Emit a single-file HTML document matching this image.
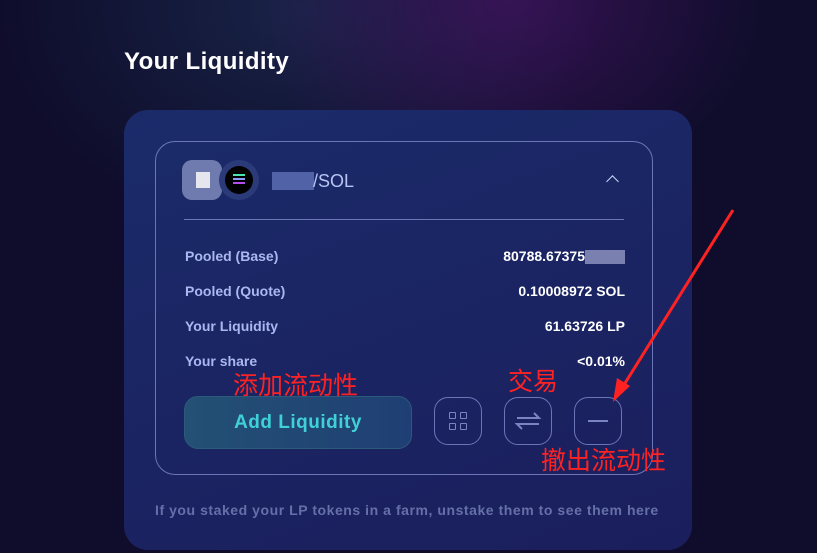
<!DOCTYPE html>
<html style="width:817px;height:553px;overflow:hidden;background:#0f0d2b"><head><meta charset="utf-8"><style>
body{margin:0;width:817px;height:553px;overflow:hidden;font-family:"Liberation Sans","Noto Sans CJK SC",sans-serif;
background:radial-gradient(ellipse 260px 200px at 510px 0px,rgba(70,20,100,.7),transparent),radial-gradient(ellipse 300px 220px at 300px 10px,rgba(30,50,90,.6),transparent),#0f0d2b;position:relative}
.t{position:absolute;left:124px;top:48px;color:#fff;font-size:24px;font-weight:bold;letter-spacing:.4px}
.card{position:absolute;left:124px;top:110px;width:568px;height:440px;border-radius:24px;background:linear-gradient(160deg,#1b2b6a,#1b1e5c)}
.box{position:absolute;left:155px;top:141px;width:496px;height:332px;border:1.5px solid #6b76b8;border-radius:20px}
.row{position:absolute;left:185px;width:440px;font-size:14px;color:#aab8f0;font-weight:bold}
.row span{position:absolute;right:0;color:#fff}
.r{position:absolute;color:#f22;font-size:25px;line-height:28px}
.ib{position:absolute;top:397px;width:48px;height:48px;border:1.5px solid #6b76b8;border-radius:14px;box-sizing:border-box}
.sq{position:absolute;width:5px;height:5px;border:1.5px solid #7a85c0;border-radius:1px}
</style></head><body>
<div class="t">Your Liquidity</div>
<div class="card"></div>
<div class="box"></div>
<div style="position:absolute;left:182px;top:160px;width:40px;height:40px;background:#8590c0;border-radius:10px;opacity:.8"></div>
<div style="position:absolute;left:196px;top:172px;width:14px;height:16px;background:#e6e6ee"></div>
<div style="position:absolute;left:219px;top:160px;width:40px;height:40px;border-radius:50%;background:#2b3a78"></div>
<div style="position:absolute;left:225px;top:166px;width:28px;height:28px;border-radius:50%;background:#000"></div>
<div style="position:absolute;left:233px;top:174px;width:12px;height:2px;background:#4be3b0;box-shadow:0 4px 0 #8a9cf5,0 8px 0 #b44cf0"></div>
<div style="position:absolute;left:272px;top:172px;width:42px;height:18px;background:#5262a6"></div>
<div style="position:absolute;left:313px;top:171px;color:#b7c4f4;font-size:18px">/SOL</div>
<div style="position:absolute;left:608px;top:177px;width:8px;height:8px;border-left:1.5px solid #cfd6f5;border-top:1.5px solid #cfd6f5;transform:rotate(45deg)"></div>
<div style="position:absolute;left:184px;top:219px;width:440px;height:1px;background:#6b76b8"></div>
<div class="row" style="top:248px">Pooled (Base)<span>80788.67375<b style="display:inline-block;width:40px;height:14px;background:#7a80b0;vertical-align:middle"></b></span></div>
<div class="row" style="top:283px">Pooled (Quote)<span>0.10008972 SOL</span></div>
<div class="row" style="top:318px">Your Liquidity<span>61.63726 LP</span></div>
<div class="row" style="top:353px">Your share<span>&lt;0.01%</span></div>
<div style="position:absolute;left:184px;top:396px;width:228px;height:53px;border-radius:14px;border:1.5px solid #2c5a7a;box-sizing:border-box;background:linear-gradient(90deg,#235074,#1f3f74);color:#3fd0d8;font-size:19px;font-weight:bold;text-align:center;line-height:51px;letter-spacing:.5px">Add Liquidity</div>
<div class="ib" style="left:434px"><div class="sq" style="left:14px;top:14px"></div><div class="sq" style="left:25px;top:14px"></div><div class="sq" style="left:14px;top:25px"></div><div class="sq" style="left:25px;top:25px"></div></div>
<div class="ib" style="left:504px"><svg width="48" height="48" style="position:absolute;left:-1.5px;top:-1.5px"><path d="M13 21H35L30 16M35 27H13L18 32" stroke="#7a85c0" stroke-width="2" fill="none"/></svg></div>
<div class="ib" style="left:574px"><div style="position:absolute;left:13px;top:22px;width:20px;height:2px;background:#7a85c0"></div></div>
<div style="position:absolute;left:155px;top:502px;color:#6670a8;font-size:14px;font-weight:bold;letter-spacing:.55px">If you staked your LP tokens in a farm, unstake them to see them here</div>
<div class="r" style="left:233px;top:372px">添加流动性</div>
<div class="r" style="left:508px;top:368px">交易</div>
<div class="r" style="left:541px;top:447px">撤出流动性</div>
<svg width="817" height="553" style="position:absolute;left:0;top:0"><path d="M733 210L622 388" stroke="#f22" stroke-width="3"/><path d="M613 402L617 378L630 386Z" fill="#f22"/></svg>
</body></html>
